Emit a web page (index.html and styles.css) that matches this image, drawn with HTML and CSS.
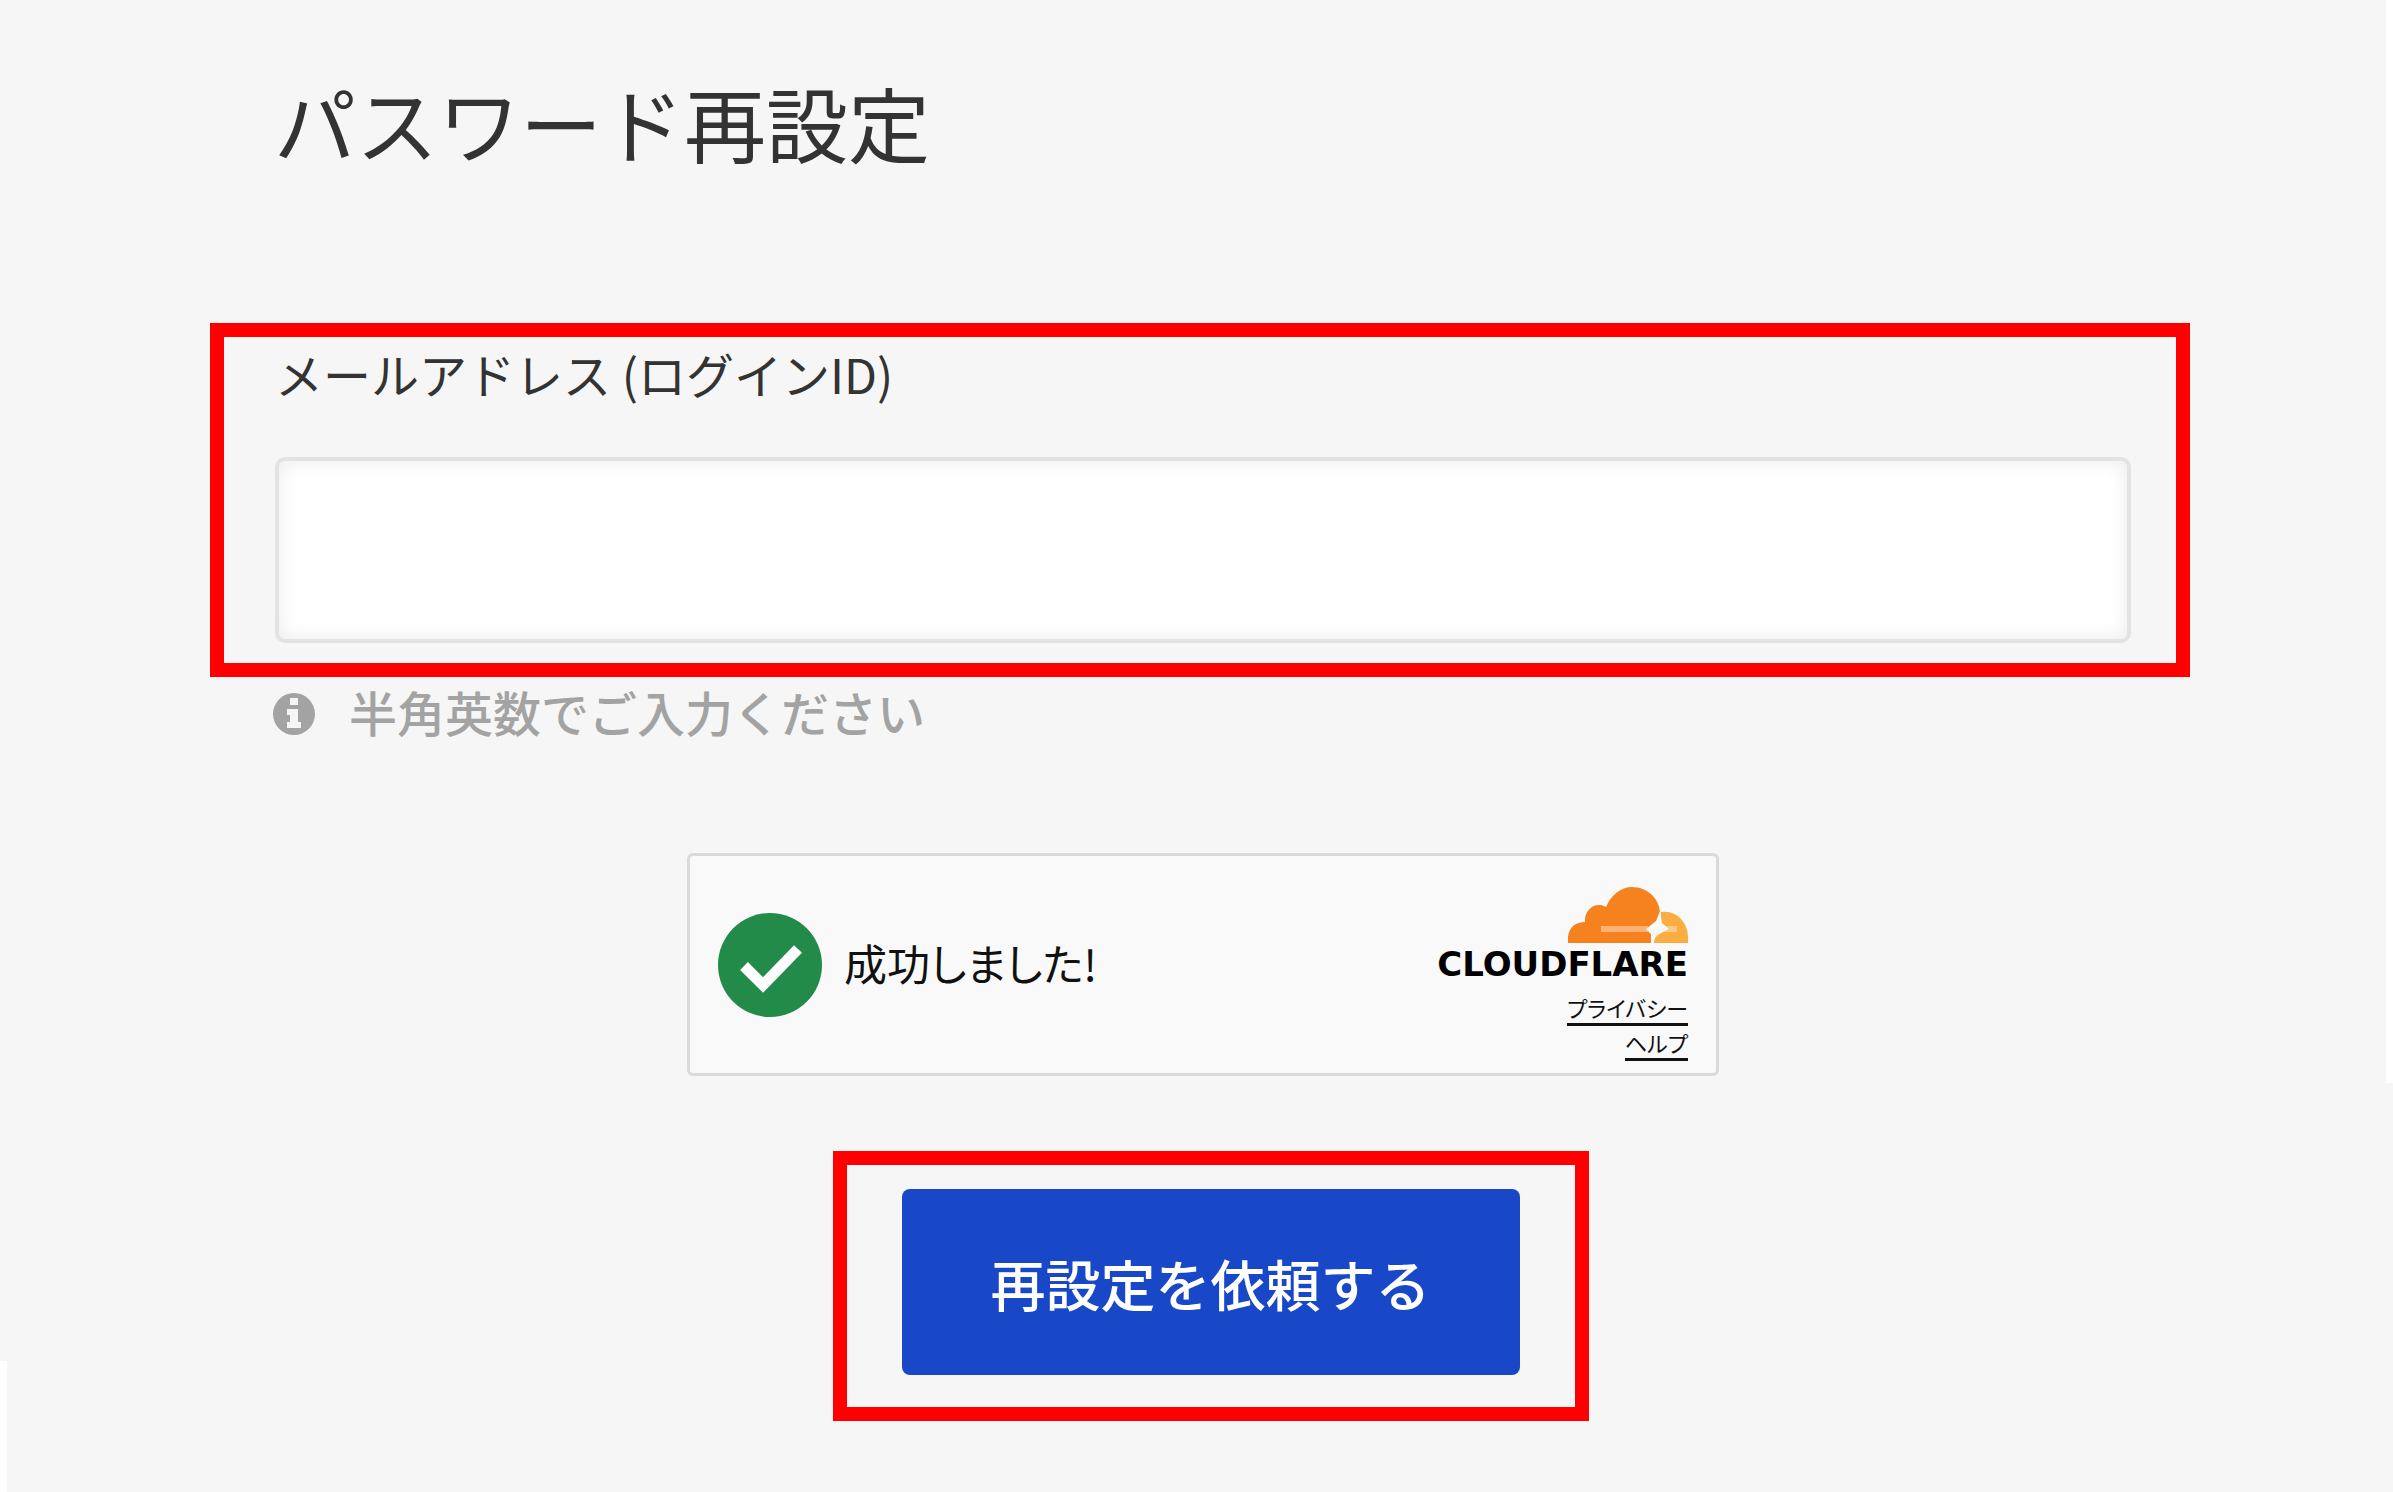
FILE: index.html
```html
<!DOCTYPE html>
<html lang="ja">
<head>
<meta charset="utf-8">
<meta name="viewport" content="width=device-width, initial-scale=1">
<title>パスワード再設定</title>
<link rel="stylesheet" href="styles.css">
</head>
<body>
<main class="page">
  <h1 class="title">パスワード再設定</h1>
  <form class="form">
    <div class="highlight field">
      <label class="label" for="email">メールアドレス (ログインID)</label>
      <input class="input" id="email" name="email" type="text" autocomplete="email" aria-describedby="email-hint">
    </div>
    <p class="hint" id="email-hint">
      <svg class="hint-icon" viewBox="0 0 42 42" aria-hidden="true">
        <circle cx="21" cy="21" r="21" fill="#a3a3a3"/>
        <path fill="#f6f6f6" d="M17 5h8v7h-8zM14 16h11v13h3v6H14v-6h3v-7h-3z"/>
      </svg>
      <span>半角英数でご入力ください</span>
    </p>
    <section class="captcha">
      <svg class="check" viewBox="0 0 104 104" aria-hidden="true">
        <circle cx="52" cy="52" r="52" fill="#228b49"/>
        <path d="M26 53L45 72L80 36" fill="none" stroke="#fff" stroke-width="11"/>
      </svg>
      <span class="status">成功しました!</span>
      <div class="brand">
        <svg class="cloud" viewBox="0 0 120 56" aria-hidden="true">
          <path fill="#f6821f" d="M0 56V50C1 40 8 35 17 35C16 23 27 14 38 20C43 8 53 0 64 0C79 0 91 11 92 25C92 30 90 34 87 37L79 42L83 47V56Z"/>
          <path fill="#fbad41" d="M93 25C109 23 120 36 120 50V56H86C86 51 89 47 94 45L97 42L93 38Z"/>
          <path fill="#fbb277" d="M33 39H80V45H33Z"/>
          <path fill="#fdca85" d="M94 39H109V45H94Z"/>
          <path fill="#f9f9f9" d="M88 34L92 24L94 36L101 42L93 46L86 51V56H83V47L78 42Z"/>
        </svg>
        <span class="wordmark">CLOUDFLARE</span>
        <a class="link" href="#privacy">プライバシー</a>
        <a class="link" href="#help">ヘルプ</a>
      </div>
    </section>
    <div class="actions">
      <div class="highlight action-frame">
        <button class="submit" type="submit">再設定を依頼する</button>
      </div>
    </div>
  </form>
</main>
</body>
</html>
```
FILE: styles.css
```css
*, *::before, *::after { box-sizing: border-box; }

body {
  margin: 0;
  min-height: 100vh;
  color: #333;
  font-family: "Noto Sans CJK JP", sans-serif;
  background:
    linear-gradient(#fff, #fff) right top / 7px 1083px no-repeat,
    linear-gradient(#fff, #fff) left 1361px / 7px 100% no-repeat,
    #f6f6f6;
}

.page { padding: 62px 203px 64px 210px; }

.title {
  margin: 0 0 141px;
  padding-left: 64px;
  font-size: 82px;
  line-height: 120px;
  font-weight: 400;
}

.form { display: flex; flex-direction: column; }

.highlight { border: 14px solid #f00; }

.field {
  display: flex;
  flex-direction: column;
  gap: 48px;
  padding: 0 45px 20px 51px;
}

.label { font-size: 48px; line-height: 72px; }

.input {
  width: 100%;
  height: 186px;
  padding: 0 36px;
  border: 4px solid #e3e3e3;
  border-radius: 10px;
  background: #fff;
  box-shadow: inset 0 0 20px rgba(0, 0, 0, 0.08);
  font: inherit;
  font-size: 48px;
}

.hint {
  display: flex;
  align-items: flex-end;
  gap: 34px;
  margin: 0;
  padding-left: 63px;
  color: #a3a3a3;
  font-size: 48px;
  line-height: 68px;
  font-weight: 500;
}

.hint-icon {
  width: 42px;
  height: 42px;
  margin-bottom: 10px;
}

.captcha {
  display: flex;
  align-items: center;
  align-self: center;
  gap: 22px;
  width: 1032px;
  max-width: 100%;
  min-height: 223px;
  margin: 108px 0 75px 6px;
  padding: 0 28px;
  border: 3px solid #dadada;
  border-radius: 6px;
  background: #f9f9f9;
  color: #111;
}

.check { width: 104px; height: 104px; }

.status {
  padding-bottom: 6px;
  font-size: 43px;
  line-height: 64px;
  font-weight: 400;
  font-feature-settings: "palt";
}

.brand {
  display: flex;
  flex-direction: column;
  align-items: flex-end;
  align-self: flex-start;
  margin-left: auto;
  padding-top: 31px;
}

.cloud { width: 120px; height: 56px; }

.wordmark {
  margin-bottom: 6px;
  color: #000;
  font-family: "DejaVu Sans", sans-serif;
  font-size: 34px;
  line-height: 42px;
  font-weight: 700;
}

.link {
  color: #111;
  border-bottom: 3px solid #111;
  font-size: 22px;
  line-height: 32px;
  font-feature-settings: "palt";
  text-decoration: none;
}

.actions { display: flex; justify-content: center; padding-left: 21px; }

.action-frame { padding: 24px 55px 32px; }

.submit {
  width: 618px;
  height: 186px;
  padding: 0;
  border: 0;
  border-radius: 8px;
  background: #1847c8;
  color: #fff;
  font-family: inherit;
  font-size: 55px;
  font-weight: 500;
}
```
